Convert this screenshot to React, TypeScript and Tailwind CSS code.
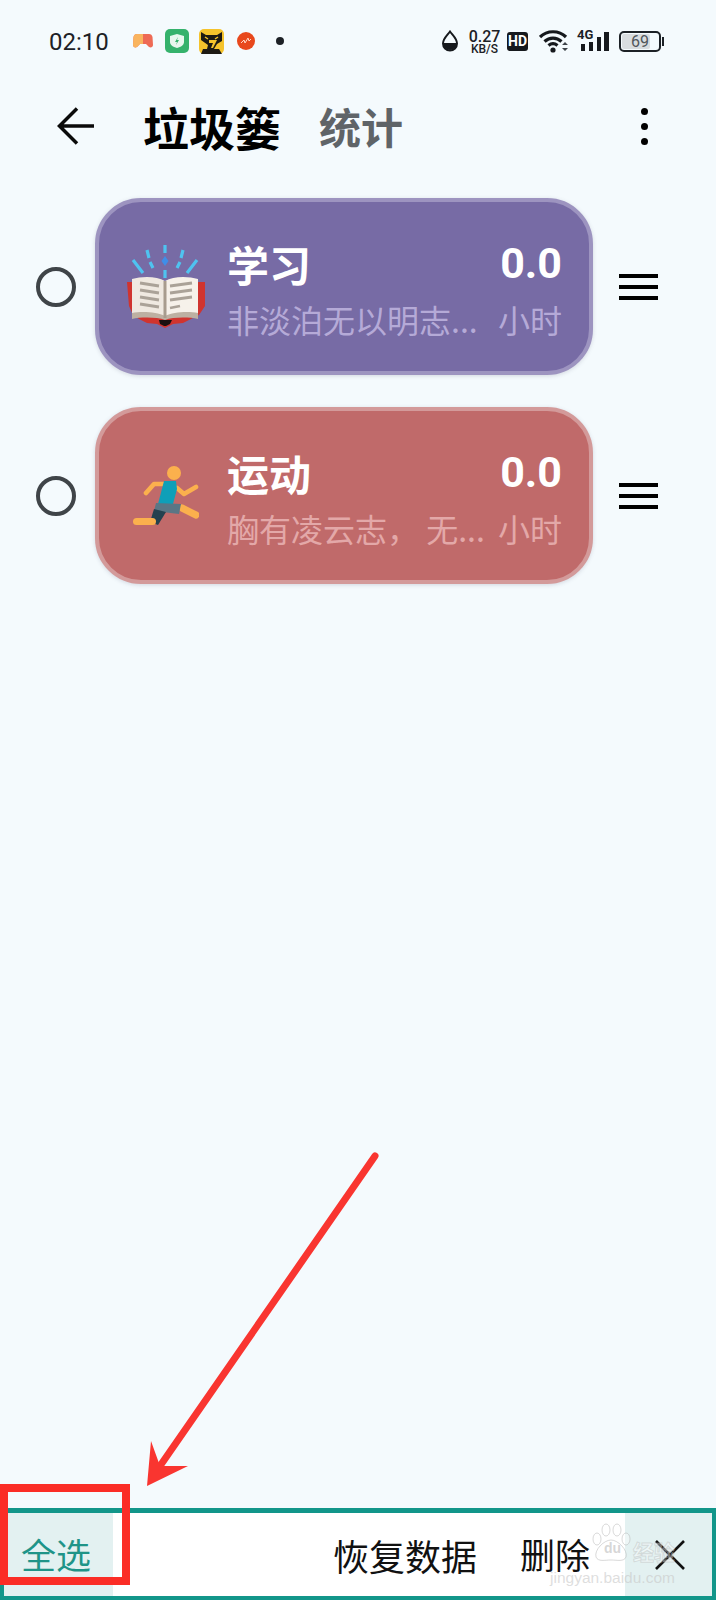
import React from "react";

const cjk = "font-['Noto_Sans_CJK_SC','Noto_Sans',sans-serif]";

const BookIcon = () => (
  <svg viewBox="0 0 78 84" className="w-[78px] h-[84px]">
    <g stroke="#4fc3f0" strokeWidth="3.2">
      <path d="M38 0v8M38 25v8M20 5l2 8M23 17l3 6M56 5l-2 8M53 17l-3 6M6 15l10 13M70 15l-10 13" />
    </g>
    <path d="M38 11l3.500 5-3.500 5-3.500-5z" fill="#3f8ee8" />
    <path d="M0 37h8v32h62V37h8v24l-6 9-8 4-8 4-10 1-8 4-8-4-10-1-8-4-6-4-4-9z" fill="#d0342f" />
    <path d="M5 34c10-3 25-3 33 2v36c-8-3-23-3-33-1z" fill="#efe9e1" />
    <path d="M71 34c-10-3-25-3-33 2v36c8-3 23-3 33-1z" fill="#f6f1ea" />
    <path d="M5 68c10-2 25-1 33 3v4c-8-3-24-3-33-1zM71 68c-10-2-25-1-33 3v4c8-3 24-3 33-1z" fill="#bdb0a2" />
    <path d="M32 75h13l-2 4-4 2h-2l-4-2z" fill="#1a1010" />
    <rect x="36.500" y="36" width="3" height="37" fill="#a89c8e" />
    <g stroke="#aaa298" strokeWidth="2.800" fill="none">
      <path d="M13 38l19 3M13 45l19 3M13 52l19 3M13 59l19 3" />
      <path d="M65 38l-22 3M65 45l-22 3M65 52l-22 3M53 61l-10 2" />
    </g>
  </svg>
);

const RunnerIcon = () => (
  <svg viewBox="0 0 66 60" className="w-[66px] h-[60px] -ml-[1px]">
    <circle cx="41" cy="7" r="7" fill="#fbb04d" />
    <path d="M13 27l8-9h14M44 22l7 6 12-7" fill="none" stroke="#fbb04d" strokeWidth="4.600" strokeLinecap="round" strokeLinejoin="round" />
    <path d="M31 15h12l1 8-4 15H25z" fill="#0f9fb8" />
    <path d="M49 42l14 7" stroke="#fbb04d" strokeWidth="7" strokeLinecap="round" />
    <path d="M23 37l25 1-2 10-25-3z" fill="#5a7685" />
    <path d="M21 43l12 3-8 13-8-3z" fill="#24414f" />
    <rect x="0" y="52" width="23" height="7" rx="3.500" fill="#fbb04d" />
  </svg>
);

const Row = ({
  bg,
  border,
  sub,
  title,
  text,
  icon,
}: {
  bg: string;
  border: string;
  sub: string;
  title: string;
  text: string;
  icon: React.ReactNode;
}) => (
  <div className="flex items-center pl-[36px]">
    <div className="w-[40px] h-[40px] rounded-full border-[4px] border-[#3f4448] shrink-0" />
    <div
      className={`ml-[19px] w-[498px] h-[177px] rounded-[46px] border-[4px] shadow-[0_1px_4px_rgba(80,80,110,0.2)] flex items-center pl-[28px] pr-[27px] ${bg} ${border}`}
    >
      <div className="w-[78px] h-[90px] flex items-center justify-center shrink-0">{icon}</div>
      <div className={`ml-[22px] flex-1 pt-[4px] ${cjk}`}>
        <div className="flex justify-between items-center h-[50px]">
          <span className="text-[42px] leading-[50px] font-bold text-white">{title}</span>
          <span className="-translate-y-[1px] text-[43px] leading-[50px] font-bold text-white font-['Roboto',sans-serif]">0.0</span>
        </div>
        <div className="mt-[10px] flex justify-between items-center h-[40px] text-[32px] leading-[40px]" style={{ color: sub }}>
          <span className="whitespace-pre">{text}</span>
          <span>小时</span>
        </div>
      </div>
    </div>
    <div className="ml-[26px] w-[39px] flex flex-col gap-[7px]">
      <div className="h-[4px] bg-black" />
      <div className="h-[4px] bg-black" />
      <div className="h-[4px] bg-black" />
    </div>
  </div>
);

const StatusBar = () => (
  <div className="h-[82px] flex items-center pl-[49px] text-[#1c2126] font-['Roboto',sans-serif]">
    <span className="mt-[2px] text-[24px] w-[84px]">02:10</span>
    {/* controller */}
    <svg viewBox="0 0 20 14" className="w-[20px] h-[14px]">
      <path d="M4 0h12c2 0 3 1 3.500 3l.5 8c0 2-2 3-4 2l-3-3H7l-3 3c-2 1-4 0-4-2l.5-8C1 1 2 0 4 0z" fill="#ee6a55" />
      <path d="M4 0h6v10H7l-3 3c-2 1-4 0-4-2l.5-8C1 1 2 0 4 0z" fill="#f9b45f" />
    </svg>
    <svg viewBox="0 0 24 24" className="ml-[12px] w-[24px] h-[24px]">
      <rect width="24" height="24" rx="5" fill="#35b26c" />
      <path d="M12 5l7 2v6c0 3-3 5-7 6-4-1-7-3-7-6V7z" fill="#e8f7ee" />
      <path d="M13 8l-3 5h2l-1 3 3-5h-2z" fill="#35b26c" />
    </svg>
    <svg viewBox="0 0 25 25" className="ml-[10px] w-[25px] h-[25px]">
      <rect width="25" height="25" rx="5" fill="#f5c32c" />
      <path d="M2 3l5 3h11l5-3v9l-5 3-3 5h5l3 5H2l2-5h4l1-4-7-5z" fill="#1d1a14" />
      <path d="M6 8l3 2M19 8l-3 2" stroke="#f5c32c" strokeWidth="1.500" />
      <path d="M10 11h8l-4 8h-2l2-5h-4z" fill="#f5c32c" />
    </svg>
    <svg viewBox="0 0 22 22" className="ml-[11px] w-[22px] h-[22px]">
      <circle cx="11" cy="11" r="9" fill="#e8481c" />
      <path d="M6 13l3-3 1 3 3-5 1 3 2-2" fill="none" stroke="#ffd9c8" strokeWidth="1" />
    </svg>
    <div className="ml-[19px] w-[8px] h-[8px] rounded-full bg-[#1c2126]" />
    <div className="flex-1" />
    <svg viewBox="0 0 18 22" className="w-[18px] h-[22px]">
      <path d="M9 1.500c3 4 7 7 7 12a7 7 0 0 1-14 0c0-5 4-8 7-12z" fill="none" stroke="#16191d" strokeWidth="2" />
      <path d="M2 13h14a7 7 0 0 1-14 0z" fill="#16191d" />
    </svg>
    <div className="ml-[9px] mt-[2px] w-[33px] flex flex-col items-center font-medium">
      <span className="text-[16px] leading-[14px]">0.27</span>
      <span className="text-[12px] leading-[11px]">KB/S</span>
    </div>
    <div className="ml-[6px] w-[21px] h-[19px] rounded-[3px] bg-[#16191d] text-white text-[14px] leading-[19px] font-bold text-center">HD</div>
    <svg viewBox="0 0 30 24" className="ml-[11px] w-[30px] h-[24px]">
      <path d="M1 8c7-7 19-7 26 0M5.500 12.500c5-4.500 12-4.500 17 0M9.500 16.500c3-2.500 6-2.500 9 0" fill="none" stroke="#16191d" strokeWidth="3.200" />
      <circle cx="14" cy="21" r="2.600" fill="#16191d" />
      <path d="M23 16l3-3 3 3zM23 19l3 3 3-3z" fill="#3c4248" />
    </svg>
    <div className="ml-[9px] w-[31px] h-[22px] relative">
      <svg viewBox="0 0 31 22" className="w-[31px] h-[22px]">
        <path d="M3 14h4v7H3zM11 12h4v9h-4zM19 7h4v14h-4zM26 2h5v19h-5z" fill="#16191d" />
      </svg>
      <span className="absolute -left-[1px] -top-[2px] text-[13px] leading-[13px] font-bold">4G</span>
    </div>
    <div className="ml-[10px] w-[42px] h-[21px] rounded-[5px] border-[2px] border-[#1c2126] p-[1px] relative">
      <div className="w-[28px] h-full rounded-[2px] bg-[#d8dcdf]" />
      <span className="absolute inset-0 text-center text-[#50565b] text-[16px] leading-[17px]">69</span>
    </div>
    <div className="ml-[1px] mr-[52px] w-[2px] h-[9px] bg-[#1c2126]" />
  </div>
);

const Header = () => (
  <div className={`h-[88px] flex items-center pl-[57px] ${cjk}`}>
    <svg viewBox="0 0 38 38" className="w-[38px] h-[38px]">
      <path d="M37 19H3M20 1.500L2.500 19 20 36.500" fill="none" stroke="#0a0a0a" strokeWidth="3.500" />
    </svg>
    <span className="ml-[50px] -translate-x-[2px] text-[46px] leading-[60px] font-bold text-black">垃圾篓</span>
    <span className="ml-[36px] text-[42px] leading-[60px] font-bold text-[#5f6468]">统计</span>
    <div className="flex-1" />
    <div className="mr-[68px] flex flex-col gap-[8px]">
      <div className="w-[7px] h-[7px] rounded-full bg-black" />
      <div className="w-[7px] h-[7px] rounded-full bg-black" />
      <div className="w-[7px] h-[7px] rounded-full bg-black" />
    </div>
  </div>
);

const BottomBar = () => (
  <div className={`h-[92px] flex items-stretch border-[4px] border-t-[5px] border-[#12968a] bg-white text-[35px] ${cjk}`}>
    <div className="w-[109px] bg-[#e3f1f1] pl-[17px] flex items-center text-[#1f9488]">全选</div>
    <div className="flex-1" />
    <div className="flex items-center text-[#111] text-[36px]">恢复数据</div>
    <div className="ml-[43px] mr-[35px] flex items-center text-[#111]">删除</div>
    <div className="w-[87px] bg-[#e3f1f1] flex items-center justify-center">
      <svg viewBox="0 0 30 30" className="w-[30px] h-[30px] ml-[2px]">
        <path d="M1 1l28 28M29 1L1 29" stroke="#111" strokeWidth="2.600" />
      </svg>
    </div>
  </div>
);

export default function App() {
  return (
    <div className="relative w-full h-[1600px] overflow-hidden bg-[#f4fafd] flex flex-col">
      <StatusBar />
      <Header />
      <div className="flex-1 pt-[28px] flex flex-col gap-[32px]">
        <Row
          bg="bg-[#776ba5]"
          border="border-[#9d94c0]"
          sub="#b5aad7"
          title="学习"
          text="非淡泊无以明志..."
          icon={<BookIcon />}
        />
        <Row
          bg="bg-[#c06a6a]"
          border="border-[#d39a9a]"
          sub="#e3a8a8"
          title="运动"
          text="胸有凌云志， 无..."
          icon={<RunnerIcon />}
        />
      </div>
      <BottomBar />

      {/* screenshot annotation */}
      <div className="absolute left-0 top-[1484px] w-[130px] h-[101px] border-[8px] border-[#fb2d26]" />
      <svg viewBox="0 0 716 1600" className="absolute inset-0 w-[716px] h-[1600px] pointer-events-none">
        <path d="M375 1156L160 1466" stroke="#f93530" strokeWidth="7" strokeLinecap="round" />
        <path d="M151 1441L147 1486L188 1466L160 1466z" fill="#f93530" />
      </svg>

      {/* watermark */}
      <svg viewBox="0 0 40 40" className="absolute left-[591px] top-[1523px] w-[40px] h-[40px]">
        <g fill="rgba(255,255,255,0.35)" stroke="rgba(170,170,170,0.45)" strokeWidth="1">
          <ellipse cx="6" cy="16" rx="4" ry="6" />
          <ellipse cx="15" cy="7" rx="4" ry="6" />
          <ellipse cx="26" cy="7" rx="4" ry="6" />
          <ellipse cx="35" cy="16" rx="4" ry="6" />
          <path d="M20 17c7 0 17 10 15 17-2 5-9 3-15 3s-13 2-15-3c-2-7 8-17 15-17z" />
        </g>
      </svg>
      <span className="absolute left-[604px] top-[1540px] text-[14px] leading-[16px] font-bold text-[rgba(180,180,180,0.55)] font-['Liberation_Sans',sans-serif]">du</span>
      <span className={`absolute left-[633px] top-[1537px] text-[21px] leading-[28px] font-bold text-[rgba(255,255,255,0.4)] [-webkit-text-stroke:1px_rgba(170,170,170,0.35)] ${cjk}`}>经验</span>
      <span className="absolute left-[550px] top-[1569px] text-[15.500px] leading-[18px] text-[rgba(200,200,200,0.6)] font-['Liberation_Sans',sans-serif]">jingyan.baidu.com</span>
    </div>
  );
}
